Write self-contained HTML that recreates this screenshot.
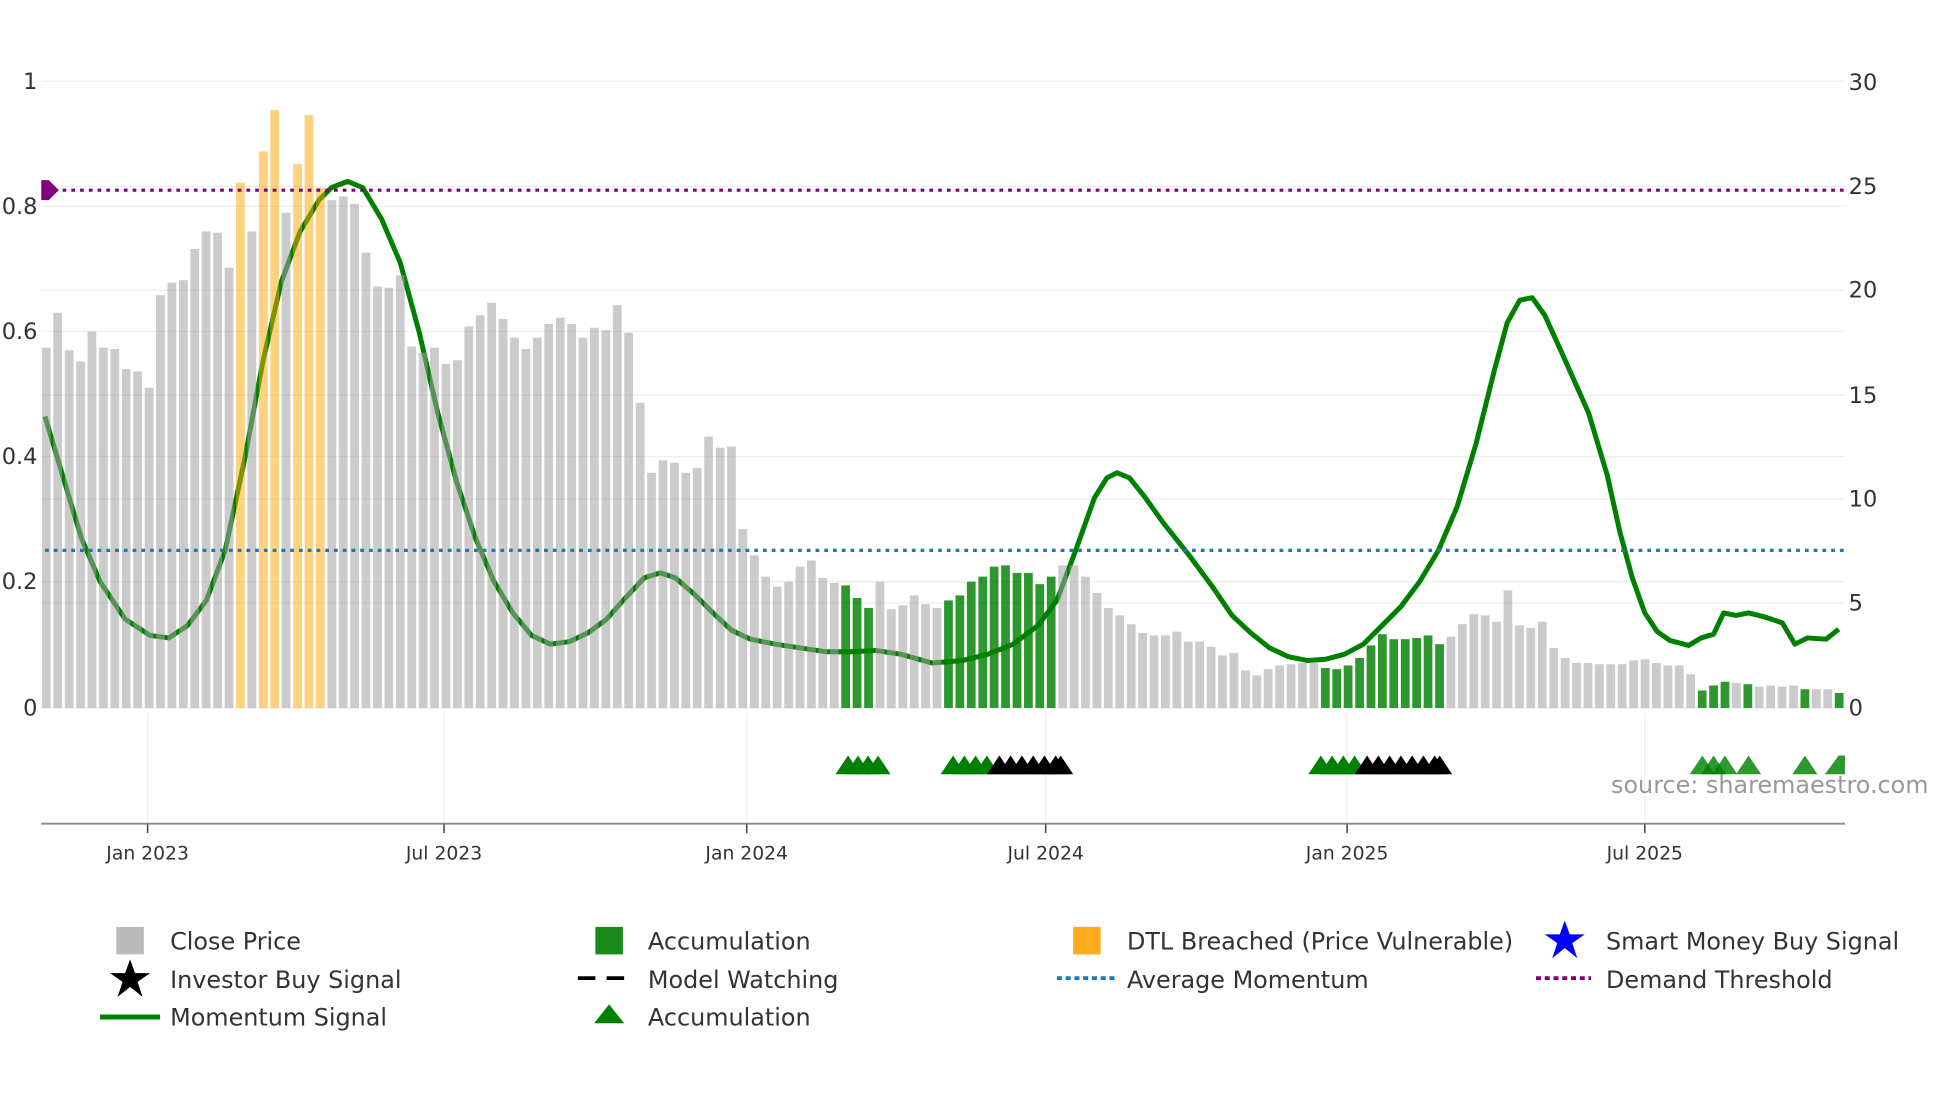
<!DOCTYPE html>
<html><head><meta charset="utf-8"><style>
html,body{margin:0;padding:0;background:#fff;}
svg{display:block;font-family:"DejaVu Sans","Liberation Sans",sans-serif;}
</style></head><body>
<svg id="s" width="1960" height="1102" viewBox="0 0 1567 881" preserveAspectRatio="none" xmlns="http://www.w3.org/2000/svg">
<g stroke="#eceef2" stroke-width="1">
<line x1="33" x2="1475" y1="65" y2="65"/><line x1="33" x2="1475" y1="165" y2="165"/><line x1="33" x2="1475" y1="265" y2="265"/><line x1="33" x2="1475" y1="365" y2="365"/><line x1="33" x2="1475" y1="465" y2="465"/>
<line x1="33" x2="1475" y1="149" y2="149"/><line x1="33" x2="1475" y1="232" y2="232"/><line x1="33" x2="1475" y1="316" y2="316"/><line x1="33" x2="1475" y1="399" y2="399"/><line x1="33" x2="1475" y1="482" y2="482"/>
<line x1="118" x2="118" y1="570" y2="658"/><line x1="355" x2="355" y1="570" y2="658"/><line x1="597" x2="597" y1="570" y2="658"/><line x1="836" x2="836" y1="570" y2="658"/><line x1="1077" x2="1077" y1="570" y2="658"/><line x1="1315" x2="1315" y1="570" y2="658"/>
</g>
<line x1="33" x2="1475" y1="566" y2="566" stroke="#eceef2"/>
<polyline fill="none" stroke="#008000" stroke-width="4" stroke-linejoin="round" points="36,333 50,380 65,430 80,465 100,495 120,508 135,510 150,500 165,480 180,440 195,370 210,290 225,225 240,185 255,160 265,150 278,145 290,150 305,175 320,210 335,265 350,330 365,385 380,430 395,465 410,490 425,508 440,515 455,513 470,506 485,495 500,478 515,462 528,458 540,462 555,475 570,490 585,504 600,511 620,515 640,518 660,521 680,521 700,520 720,523 745,530 770,528 790,523 810,515 830,500 845,480 860,440 875,398 885,382 893,378 903,382 915,397 930,418 950,443 970,470 985,492 1000,506 1015,518 1030,525 1045,528 1060,527 1075,523 1090,515 1105,500 1120,485 1135,465 1150,440 1165,405 1180,355 1195,295 1205,258 1215,240 1225,238 1235,252 1250,285 1270,330 1285,380 1295,425 1305,462 1315,490 1325,505 1335,512 1350,516 1360,510 1370,507 1378,490 1388,492 1398,490 1410,493 1425,498 1435,515 1445,510 1460,511 1470,503"/>
<g id="bars"></g>
<line x1="36" x2="1475" y1="152" y2="152" stroke="#800080" stroke-width="2.5" stroke-dasharray="3,4"/>
<polygon points="33,144 39,144 47,152 39,160 33,160" fill="#800080"/>
<line x1="36" x2="1475" y1="440" y2="440" stroke="#1f77b4" stroke-width="2.5" stroke-dasharray="3,4"/>
<g id="tri"></g>
<line x1="33" x2="1475" y1="658.5" y2="658.5" stroke="#888" stroke-width="1.5"/>
<g stroke="#444" stroke-width="1.2"><line x1="118" x2="118" y1="659" y2="666"/><line x1="355" x2="355" y1="659" y2="666"/><line x1="597" x2="597" y1="659" y2="666"/><line x1="836" x2="836" y1="659" y2="666"/><line x1="1077" x2="1077" y1="659" y2="666"/><line x1="1315" x2="1315" y1="659" y2="666"/></g>
<g font-size="15" fill="#333" text-anchor="middle"><text x="118" y="687">Jan 2023</text><text x="355" y="687">Jul 2023</text><text x="597" y="687">Jan 2024</text><text x="836" y="687">Jul 2024</text><text x="1077" y="687">Jan 2025</text><text x="1315" y="687">Jul 2025</text></g>
<g font-size="18" fill="#333" text-anchor="end"><text x="30" y="71">1</text><text x="30" y="171">0.8</text><text x="30" y="271">0.6</text><text x="30" y="371">0.4</text><text x="30" y="471">0.2</text><text x="30" y="572">0</text></g>
<g font-size="18" fill="#333"><text x="1478" y="72">30</text><text x="1478" y="155">25</text><text x="1478" y="238">20</text><text x="1478" y="322">15</text><text x="1478" y="405">10</text><text x="1478" y="488">5</text><text x="1478" y="572">0</text></g>
<text x="1288" y="634" font-size="19.1" fill="#999">source: sharemaestro.com</text>
<g font-size="19.1" fill="#333">
<rect x="93" y="741" width="22" height="22" fill="#bbb"/><text x="136" y="759">Close Price</text>
<rect x="476" y="741" width="22" height="22" fill="#1a8a1a"/><text x="518" y="759">Accumulation</text>
<rect x="858" y="741" width="22" height="22" fill="#ffab1a"/><text x="901" y="759">DTL Breached (Price Vulnerable)</text>
<polygon fill="#0000ff" points="1251,736 1255,747 1267,747 1257,754 1261,766 1251,758 1241,766 1245,754 1235,747 1247,747"/><text x="1284" y="759">Smart Money Buy Signal</text>
<polygon fill="#000" points="104,767 108,778 120,778 110,785 114,797 104,789 94,797 98,785 88,778 100,778"/><text x="136" y="790">Investor Buy Signal</text>
<line x1="462" x2="508" y1="782" y2="782" stroke="#000" stroke-width="3" stroke-dasharray="14,9"/><text x="518" y="790">Model Watching</text>
<line x1="845" x2="892" y1="782" y2="782" stroke="#1f77b4" stroke-width="3" stroke-dasharray="4,3"/><text x="901" y="790">Average Momentum</text>
<line x1="1228" x2="1272" y1="782" y2="782" stroke="#800080" stroke-width="3" stroke-dasharray="4,3"/><text x="1284" y="790">Demand Threshold</text>
<line x1="80" x2="128" y1="813" y2="813" stroke="#008000" stroke-width="4"/><text x="136" y="820">Momentum Signal</text>
<polygon fill="#008000" points="487,803 499,818 475,818"/><text x="518" y="820">Accumulation</text>
</g>
</svg>
<script>
var tops=[278,250,280,289,265,278,279,295,297,310,236,226,224,199,185,186,214,146,185,121,88,170,131,92,150,160,157,163,202,229,230,220,277,282,278,291,288,261,252,242,255,270,279,270,259,254,259,270,262,264,244,266,322,378,368,370,378,374,349,358,357,423,444,461,469,465,453,448,462,466,468,478,486,465,487,484,476,483,486,480,476,465,461,453,452,458,458,467,461,452,452,461,474,486,492,499,506,508,508,505,513,513,517,524,522,536,540,535,532,531,530,530,534,535,532,526,516,507,511,511,510,508,515,509,499,491,492,497,472,500,502,497,518,526,530,530,531,531,531,528,527,530,532,532,539,552,548,545,546,547,549,548,549,548,551,551,551,554];
var orange=[17,19,20,22,23,24],green=[70,71,72,79,80,81,82,83,84,85,86,87,88,112,113,114,115,116,117,118,119,120,121,122,145,146,147,149,154,157];
var h='';
for(var i=0;i<tops.length;i++){var x=33.5+i*9.13,c='#a0a0a0',o=0.55;
if(orange.indexOf(i)>=0){c='#ffa500';o=0.5;}if(green.indexOf(i)>=0){c='#008000';o=0.82;}
h+='<rect x="'+x.toFixed(1)+'" y="'+tops[i]+'" width="7" height="'+(566-tops[i])+'" fill="'+c+'" fill-opacity="'+o+'"/>';}
document.getElementById('bars').innerHTML=h;
var t='';function tr(x,c,o){t+='<polygon points="'+(x-10)+',619 '+x+',604 '+(x+10)+',619" fill="'+c+'" fill-opacity="'+(o||1)+'"/>';}
[678,686,694,702].forEach(function(x){tr(x,'#008000')});
[762,771,780,789].forEach(function(x){tr(x,'#008000')});
[799,808,817,826,835,844,848].forEach(function(x){tr(x,'#000')});
[1056,1065,1074,1083].forEach(function(x){tr(x,'#008000')});
[1093,1102,1111,1120,1129,1138,1147,1151].forEach(function(x){tr(x,'#000')});
[1361,1370,1379,1398,1443].forEach(function(x){tr(x,'#008000',0.82)});
t+='<polygon points="1459,619 1470,604 1475,604 1475,619" fill="#008000" fill-opacity="0.82"/>';
document.getElementById('tri').innerHTML=t;
</script>
</body></html>
